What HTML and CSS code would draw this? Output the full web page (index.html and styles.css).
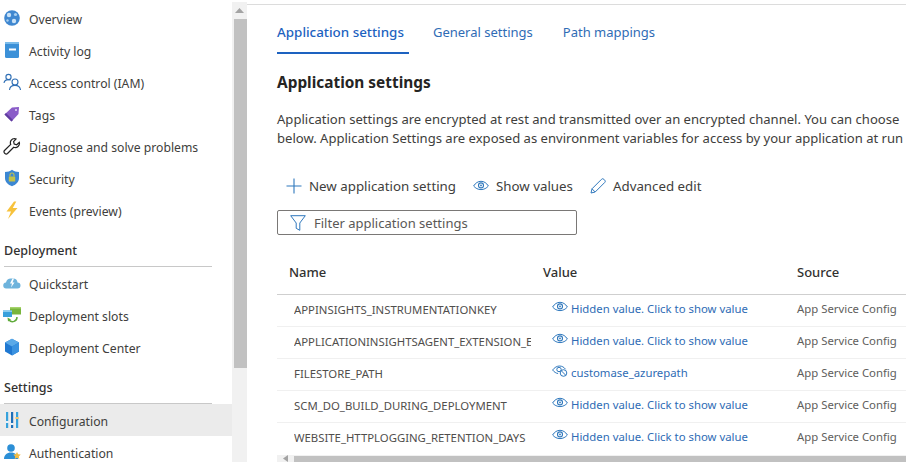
FILE: index.html
```html
<!DOCTYPE html>
<html lang="en">
<head>
<meta charset="utf-8">
<title>Configuration</title>
<link rel="stylesheet" href="styles.css">
</head>
<body>
<svg class="defs" width="0" height="0" aria-hidden="true">
  <symbol id="eye" viewBox="0 0 16 12">
    <path d="M.6 6C2.500 3 5 1.300 8 1.300S13.500 3 15.400 6C13.500 8.200 11 9.600 8 9.600S2.500 8.200.6 6Z" fill="none" stroke="currentColor" stroke-width="1"/>
    <circle cx="8" cy="5.400" r="2.500" fill="none" stroke="currentColor" stroke-width="1.100"/>
    <circle cx="8" cy="5.400" r=".9" fill="currentColor"/>
  </symbol>
</svg>
<div class="blade">
  <nav class="menu">
    <a class="item"><svg class="ico" viewBox="0 0 18 18"><circle cx="9" cy="9" r="7.800" fill="#3f87d0"/><circle cx="6" cy="6" r="2.200" fill="#c9e1f6"/><circle cx="12.500" cy="5.500" r="1.600" fill="#a9d0f0"/><circle cx="11" cy="12" r="2.200" fill="#c9e1f6"/><circle cx="4.500" cy="11.500" r="1.200" fill="#a9d0f0"/></svg><span>Overview</span></a>
    <a class="item"><svg class="ico" viewBox="0 0 18 18"><rect x="2" y="1" width="14" height="16" rx="1.500" fill="#3c91d8"/><rect x="2" y="1" width="14" height="2" fill="#7cbcea"/><rect x="6" y="7.500" width="7" height="2" fill="#fff"/></svg><span>Activity log</span></a>
    <a class="item"><svg class="ico" viewBox="0 0 18 18" fill="none" stroke="#2f6fb5" stroke-width="1.100"><circle cx="5.500" cy="4" r="2.600"/><path d="M1 10c.3-2.400 2-3.400 4.500-3.400 1 0 1.700.2 2.300.5"/><circle cx="12" cy="9" r="3"/><path d="M6.500 17c.3-3 2.500-4.600 5.500-4.600s5.200 1.600 5.500 4.600"/></svg><span>Access control (IAM)</span></a>
    <a class="item"><svg class="ico" viewBox="0 0 18 18"><path d="M1.500 9.500 9 2.500l7-.5-.5 7-7 7.500Z" fill="#8a5cc8"/><path d="M1.500 9.500 8.500 16.500l1.500-1.600-7-7Z" fill="#5f3c9e"/><circle cx="13" cy="5" r="1" fill="#e6dcf6"/></svg><span>Tags</span></a>
    <a class="item"><svg class="ico" viewBox="0 0 18 18"><path d="M11.500 1.500a4.200 4.200 0 0 0-3.800 5.800L1.500 13.500a1.900 1.900 0 0 0 0 2.500l.5.500a1.900 1.900 0 0 0 2.500 0l6.200-6.200a4.200 4.200 0 0 0 5.600-5l-2.600 2.500-2.500-.8-.6-2.400 2.500-2.600a4.200 4.200 0 0 0-1.600-.5Z" fill="#fff" stroke="#222" stroke-width="1.200"/></svg><span>Diagnose and solve problems</span></a>
    <a class="item"><svg class="ico" viewBox="0 0 18 18"><path d="M9 .8c2 1.500 4.200 2.200 7 2.200v6c0 4-3 6.800-7 8.200-4-1.400-7-4.200-7-8.200V3c2.800 0 5-.7 7-2.200Z" fill="#3b87d3"/><rect x="5.800" y="7.500" width="6.400" height="5" rx=".6" fill="#c3c24a"/><path d="M7 7.500V6a2 2 0 0 1 4 0v1.500" fill="none" stroke="#c3c24a" stroke-width="1.100"/></svg><span>Security</span></a>
    <a class="item"><svg class="ico" viewBox="0 0 18 18"><path d="M11 .5 3.500 10.500h4.500L5 18l9.500-11H9.800l3.500-6.500Z" fill="#f7c23c"/></svg><span>Events (preview)</span></a>

    <h2 class="group first">Deployment</h2>
    <a class="item"><svg class="ico" viewBox="0 0 18 18"><path d="M3.500 14.500a3 3 0 0 1-.5-6A5 5 0 0 1 8 4.500h3a4.500 4.500 0 0 1 3.500 4 3 3 0 0 1 0 6Z" fill="#6eb3dc"/><path d="M9.500 4.500 7 9.500h2L8 13.500l3.500-5h-2L11 4.500Z" fill="#fff"/></svg><span>Quickstart</span></a>
    <a class="item"><svg class="ico" viewBox="0 0 18 18"><rect x="7" y="1" width="11" height="7.500" fill="#78b53c"/><rect x="7" y="1" width="11" height="1.500" fill="#a5d36c"/><rect x="0" y="4.500" width="9" height="6.500" fill="#37a0dc"/><rect x="0" y="4.500" width="9" height="1.500" fill="#8ccdf0"/><path d="M14 11a4.500 4.500 0 0 1-8 3" fill="none" stroke="#5faa3a" stroke-width="1.500"/><path d="M4.500 11.500l.5 4 3-2Z" fill="#5faa3a"/></svg><span>Deployment slots</span></a>
    <a class="item"><svg class="ico" viewBox="0 0 18 18"><path d="M9 .8 16 4.500v9L9 17.500 2 13.500v-9Z" fill="#1f78d1"/><path d="M9 .8 16 4.500 9 8.500 2 4.500Z" fill="#5aa9e8"/><path d="M9 8.500v9l7-4v-9Z" fill="#3a92e0"/></svg><span>Deployment Center</span></a>

    <h2 class="group">Settings</h2>
    <a class="item active"><svg class="ico" viewBox="0 0 18 18"><rect x="3" y="1" width="2.200" height="16" fill="#36a2dc"/><rect x="8" y="1" width="2.200" height="16" fill="#1f6fb8"/><rect x="13" y="1" width="2.200" height="16" fill="#36a2dc"/><rect x="2.500" y="10" width="3.200" height="2" fill="#e8f2fa"/><rect x="7.500" y="12" width="3.200" height="2" fill="#e8f2fa"/><rect x="12.500" y="6" width="3.200" height="2" fill="#f0c36a"/></svg><span>Configuration</span></a>
    <a class="item"><svg class="ico" viewBox="0 0 18 18"><circle cx="8" cy="5" r="3.800" fill="#2c8fd6"/><path d="M1 16c0-4 3-6.500 7-6.500s7 2.500 7 6.500Z" fill="#2c8fd6"/><path d="M14 9l1.200 2.300 2.500.3-1.800 1.800.4 2.600-2.300-1.200-2.300 1.200.4-2.600-1.800-1.800 2.500-.3Z" fill="#f2bd46"/></svg><span>Authentication</span></a>
  </nav>

  <div class="vbar">
    <svg class="arrow" viewBox="0 0 9 5"><path d="M4.500 0 9 5H0Z" fill="#a3a3a3"/></svg>
    <div class="vthumb"></div>
  </div>

  <main class="main">
    <div class="tabs">
      <a class="tab on">Application settings</a>
      <a class="tab">General settings</a>
      <a class="tab">Path mappings</a>
    </div>
    <h1 class="title">Application settings</h1>
    <p class="desc">Application settings are encrypted at rest and transmitted over an encrypted channel. You can choose<br>below. Application Settings are exposed as environment variables for access by your application at run</p>

    <div class="toolbar">
      <a class="cmd add"><svg class="cmdico" viewBox="0 0 16 16"><path d="M8 .5v15M.5 8h15" stroke="#2f78bd" stroke-width="1.100" fill="none"/></svg><span>New application setting</span></a>
      <a class="cmd show"><svg class="cmdico eye" viewBox="0 0 16 12"><use href="#eye"/></svg><span>Show values</span></a>
      <a class="cmd edit"><svg class="cmdico" viewBox="0 0 16 16"><path d="M1 15l1-4.200L11.500 1.300a1.700 1.700 0 0 1 2.400 0l.8.8a1.700 1.700 0 0 1 0 2.400L5.200 14Z" fill="none" stroke="#2f78bd" stroke-width="1"/><path d="M2 10.800 5.200 14" stroke="#2f78bd" fill="none"/></svg><span>Advanced edit</span></a>
    </div>

    <div class="filter">
      <svg class="funnel" viewBox="0 0 16 16"><path d="M.7.7h14.600L9.800 8v7.300l-3.600-2V8Z" fill="none" stroke="#2f78bd" stroke-width="1"/></svg>
      <span>Filter application settings</span>
    </div>

    <div class="grid">
      <div class="row head">
        <div class="c-name">Name</div><div class="c-val">Value</div><div class="c-src">Source</div>
      </div>
      <div class="row">
        <div class="c-name">APPINSIGHTS_INSTRUMENTATIONKEY</div>
        <a class="c-val"><svg class="vico" viewBox="0 0 16 12"><use href="#eye"/></svg>Hidden value. Click to show value</a>
        <div class="c-src">App Service Config</div>
      </div>
      <div class="row">
        <div class="c-name">APPLICATIONINSIGHTSAGENT_EXTENSION_ENABLED</div>
        <a class="c-val"><svg class="vico" viewBox="0 0 16 12"><use href="#eye"/></svg>Hidden value. Click to show value</a>
        <div class="c-src">App Service Config</div>
      </div>
      <div class="row">
        <div class="c-name">FILESTORE_PATH</div>
        <a class="c-val"><svg class="vico" viewBox="0 0 16 12"><path d="M.6 5C2.500 2.500 5 1 7.500 1s4.500 1.200 6 3.200M.6 5c1.500 2 3.500 3.300 5.500 3.500" fill="none" stroke="currentColor"/><circle cx="7" cy="4.500" r="2.200" fill="none" stroke="currentColor"/><circle cx="11.500" cy="8" r="3.300" fill="#fff" stroke="currentColor"/><path d="M9.300 5.800l4.400 4.400" stroke="currentColor"/></svg>customase_azurepath</a>
        <div class="c-src">App Service Config</div>
      </div>
      <div class="row">
        <div class="c-name">SCM_DO_BUILD_DURING_DEPLOYMENT</div>
        <a class="c-val"><svg class="vico" viewBox="0 0 16 12"><use href="#eye"/></svg>Hidden value. Click to show value</a>
        <div class="c-src">App Service Config</div>
      </div>
      <div class="row last">
        <div class="c-name">WEBSITE_HTTPLOGGING_RETENTION_DAYS</div>
        <a class="c-val"><svg class="vico" viewBox="0 0 16 12"><use href="#eye"/></svg>Hidden value. Click to show value</a>
        <div class="c-src">App Service Config</div>
      </div>
    </div>
    <div class="hbar">
      <svg class="harrow" viewBox="0 0 5 7"><path d="M0 3.500 5 0v7Z" fill="#a3a3a3"/></svg>
      <div class="hthumb"></div>
    </div>
  </main>
</div>
</body>
</html>
```
FILE: styles.css
```css
* { box-sizing: border-box; }
html, body { margin: 0; height: 100%; overflow: hidden; background: #fff; }
body { font-family: "Noto Sans", "Open Sans", sans-serif; font-size: 13px; color: #323130; }
.defs { position: absolute; }
.blade { display: flex; width: 906px; height: 462px; overflow: hidden; }

.menu { flex: 0 0 232px; padding-top: 3px; }
.item { display: flex; align-items: center; height: 32px; color: #403e3c; font-size: 12.2px; }
.item.active { background: #ebebeb; }
.item.active, .item.active + .item { padding-top: 2px; }
.ico { flex: none; width: 18px; height: 18px; margin: 0 8px 0 3px; position: relative; top: -1px; }
.group { margin: 0 20px 0 4px; height: 40px; padding-top: 15px; border-bottom: 1px solid #c8c8c8; font-size: 12.5px; font-weight: 500; line-height: 18px; color: #323130; }
.group.first { margin-bottom: 1px; }

.vbar { flex: 0 0 15px; margin-top: 2px; background: #f1f1f1; display: flex; flex-direction: column; align-items: center; }
.arrow { width: 9px; height: 5px; margin: 6px 0 6px; }
.vthumb { width: 13px; height: 349px; background: #c1c1c1; margin-left: 1px; }

.main { flex: 1; min-width: 0; border-top: 1px solid #dcdcdc; margin-top: 4px; padding-left: 30px; display: flex; flex-direction: column; overflow: hidden; }
.tabs { display: flex; gap: 24px; height: 49px; padding-top: 17px; }
.tab { height: 32px; line-height: 20px; color: #2f6cb5; font-size: 13px; }
.tab + .tab + .tab { margin-left: 6px; }
.tab.on { font-size: 13.4px; font-weight: 500; color: #1d62c0; border-bottom: 2px solid #1d62c0; height: 32px; padding-right: 5px; }
.title { margin: 18px 0 0; font-size: 15.4px; font-weight: 700; line-height: 22px; color: #252423; }
.desc { margin: 16px 0 0; line-height: 19px; white-space: nowrap; color: #403e3c; font-size: 13.07px; }

.toolbar { display: flex; align-items: center; height: 24px; margin-top: 26px; padding-left: 9px; color: #403e3c; font-size: 13.3px; }
.cmd { display: flex; align-items: center; }
.cmdico { flex: none; width: 16px; height: 16px; margin-right: 7px; }
.cmdico.eye { height: 12px; color: #2f78bd; }
.show { margin-left: 17px; }
.edit { margin-left: 17px; }

.filter { display: flex; align-items: center; width: 300px; height: 25px; margin-top: 12px; border: 1px solid #7a7876; border-radius: 2px; padding-left: 12px; color: #5a5856; }
.funnel { width: 16px; height: 16px; margin-right: 8px; flex: none; }

.grid { margin-top: 21px; flex: none; }
.row { display: grid; grid-template-columns: 254px 249px 1fr; align-items: center; height: 32px; padding-bottom: 2px; border-bottom: 1px solid #f0f0f0; font-size: 11.35px; padding-left: 17px; color: #504e4c; }
.row.head { height: 39px; padding: 0 0 6px 12px; border-bottom-color: #cfcfcf; font-size: 13px; font-weight: 500; grid-template-columns: 254px 254px 1fr; color: #323130; }
.row.last { border-bottom-color: transparent; }
.c-name { overflow: hidden; white-space: nowrap; }
.row:not(.head) .c-name { width: 237px; }
.row:not(.head) .c-val { position: relative; top: -1px; color: #2f6cb5; display: flex; align-items: center; margin-left: 4px; white-space: nowrap; }
.row:not(.head) .c-src { position: relative; top: -1px; color: #605e5c; white-space: nowrap; }
.vico { flex: none; width: 16px; height: 12px; margin-right: 3px; position: relative; top: -2px; color: #2f78bd; }

.hbar { display: flex; align-items: center; height: 7px; background: #f1f1f1; flex: none; }
.harrow { width: 5px; height: 7px; margin: 0 6px; flex: none; }
.hthumb { flex: 1; height: 6px; margin-top: 1px; background: #c1c1c1; }
```
